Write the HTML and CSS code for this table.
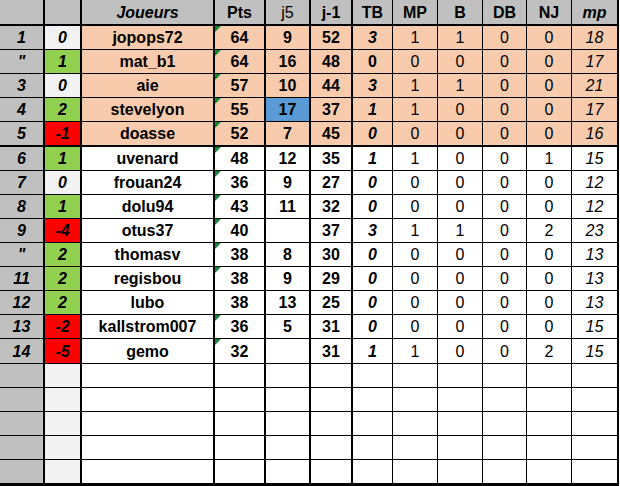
FILE: index.html
```html
<!DOCTYPE html>
<html lang="fr">
<head>
<meta charset="utf-8">
<title>Classement</title>
<link rel="stylesheet" href="styles.css">
</head>
<body>
<div class="sheet">
  <div class="row head">
    <div class="c"></div><div class="c"></div>
    <div class="c bi">Joueurs</div><div class="c b">Pts</div><div class="c">j5</div><div class="c b">j-1</div>
    <div class="c b">TB</div><div class="c b">MP</div><div class="c b">B</div><div class="c b">DB</div><div class="c b">NJ</div><div class="c bi">mp</div>
  </div>

  <div class="row top">
    <div class="c rank">1</div><div class="c ev zero">0</div><div class="c name">jopops72</div><div class="c pts"><i class="tri"></i>64</div><div class="c b">9</div><div class="c b">52</div><div class="c bi">3</div><div class="c">1</div><div class="c">1</div><div class="c">0</div><div class="c">0</div><div class="c it">18</div>
  </div>
  <div class="row top">
    <div class="c rank">"</div><div class="c ev up">1</div><div class="c name">mat_b1</div><div class="c pts"><i class="tri"></i>64</div><div class="c b">16</div><div class="c b">48</div><div class="c b">0</div><div class="c">0</div><div class="c">0</div><div class="c">0</div><div class="c">0</div><div class="c it">17</div>
  </div>
  <div class="row top">
    <div class="c rank">3</div><div class="c ev zero">0</div><div class="c name">aie</div><div class="c pts"><i class="tri"></i>57</div><div class="c b">10</div><div class="c b">44</div><div class="c bi">3</div><div class="c">1</div><div class="c">1</div><div class="c">0</div><div class="c">0</div><div class="c it">21</div>
  </div>
  <div class="row top">
    <div class="c rank">4</div><div class="c ev up">2</div><div class="c name">stevelyon</div><div class="c pts"><i class="tri"></i>55</div><div class="c b blue">17</div><div class="c b">37</div><div class="c bi">1</div><div class="c">1</div><div class="c">0</div><div class="c">0</div><div class="c">0</div><div class="c it">17</div>
  </div>
  <div class="row top sep">
    <div class="c rank">5</div><div class="c ev down">-1</div><div class="c name">doasse</div><div class="c pts"><i class="tri"></i>52</div><div class="c b">7</div><div class="c b">45</div><div class="c bi">0</div><div class="c">0</div><div class="c">0</div><div class="c">0</div><div class="c">0</div><div class="c it">16</div>
  </div>

  <div class="row">
    <div class="c rank">6</div><div class="c ev up">1</div><div class="c name">uvenard</div><div class="c pts"><i class="tri"></i>48</div><div class="c b">12</div><div class="c b">35</div><div class="c bi">1</div><div class="c">1</div><div class="c">0</div><div class="c">0</div><div class="c">1</div><div class="c it">15</div>
  </div>
  <div class="row">
    <div class="c rank">7</div><div class="c ev zero">0</div><div class="c name">frouan24</div><div class="c pts"><i class="tri"></i>36</div><div class="c b">9</div><div class="c b">27</div><div class="c bi">0</div><div class="c">0</div><div class="c">0</div><div class="c">0</div><div class="c">0</div><div class="c it">12</div>
  </div>
  <div class="row">
    <div class="c rank">8</div><div class="c ev up">1</div><div class="c name">dolu94</div><div class="c pts"><i class="tri"></i>43</div><div class="c b">11</div><div class="c b">32</div><div class="c bi">0</div><div class="c">0</div><div class="c">0</div><div class="c">0</div><div class="c">0</div><div class="c it">12</div>
  </div>
  <div class="row">
    <div class="c rank">9</div><div class="c ev down">-4</div><div class="c name">otus37</div><div class="c pts"><i class="tri"></i>40</div><div class="c b"></div><div class="c b">37</div><div class="c bi">3</div><div class="c">1</div><div class="c">1</div><div class="c">0</div><div class="c">2</div><div class="c it">23</div>
  </div>
  <div class="row">
    <div class="c rank">"</div><div class="c ev up">2</div><div class="c name">thomasv</div><div class="c pts"><i class="tri"></i>38</div><div class="c b">8</div><div class="c b">30</div><div class="c bi">0</div><div class="c">0</div><div class="c">0</div><div class="c">0</div><div class="c">0</div><div class="c it">13</div>
  </div>
  <div class="row">
    <div class="c rank">11</div><div class="c ev up">2</div><div class="c name">regisbou</div><div class="c pts"><i class="tri"></i>38</div><div class="c b">9</div><div class="c b">29</div><div class="c bi">0</div><div class="c">0</div><div class="c">0</div><div class="c">0</div><div class="c">0</div><div class="c it">13</div>
  </div>
  <div class="row">
    <div class="c rank">12</div><div class="c ev up">2</div><div class="c name">lubo</div><div class="c pts">38</div><div class="c b">13</div><div class="c b">25</div><div class="c bi">0</div><div class="c">0</div><div class="c">0</div><div class="c">0</div><div class="c">0</div><div class="c it">13</div>
  </div>
  <div class="row">
    <div class="c rank">13</div><div class="c ev down">-2</div><div class="c name">kallstrom007</div><div class="c pts"><i class="tri"></i>36</div><div class="c b">5</div><div class="c b">31</div><div class="c bi">0</div><div class="c">0</div><div class="c">0</div><div class="c">0</div><div class="c">0</div><div class="c it">15</div>
  </div>
  <div class="row tall">
    <div class="c rank">14</div><div class="c ev down">-5</div><div class="c name">gemo</div><div class="c pts"><i class="tri"></i>32</div><div class="c b"></div><div class="c b">31</div><div class="c bi">1</div><div class="c">1</div><div class="c">0</div><div class="c">0</div><div class="c">2</div><div class="c it">15</div>
  </div>

  <div class="row"><div class="c rank"></div><div class="c ev zero"></div><div class="c"></div><div class="c"></div><div class="c"></div><div class="c"></div><div class="c"></div><div class="c"></div><div class="c"></div><div class="c"></div><div class="c"></div><div class="c"></div></div>
  <div class="row"><div class="c rank"></div><div class="c ev zero"></div><div class="c"></div><div class="c"></div><div class="c"></div><div class="c"></div><div class="c"></div><div class="c"></div><div class="c"></div><div class="c"></div><div class="c"></div><div class="c"></div></div>
  <div class="row"><div class="c rank"></div><div class="c ev zero"></div><div class="c"></div><div class="c"></div><div class="c"></div><div class="c"></div><div class="c"></div><div class="c"></div><div class="c"></div><div class="c"></div><div class="c"></div><div class="c"></div></div>
  <div class="row"><div class="c rank"></div><div class="c ev zero"></div><div class="c"></div><div class="c"></div><div class="c"></div><div class="c"></div><div class="c"></div><div class="c"></div><div class="c"></div><div class="c"></div><div class="c"></div><div class="c"></div></div>
  <div class="row last"><div class="c rank"></div><div class="c ev zero"></div><div class="c"></div><div class="c"></div><div class="c"></div><div class="c"></div><div class="c"></div><div class="c"></div><div class="c"></div><div class="c"></div><div class="c"></div><div class="c"></div></div>
</div>
</body>
</html>
```

FILE: styles.css
```css
html, body {
  margin: 0;
  padding: 0;
  background: #ffffff;
}

.sheet {
  width: 619px;
  font-family: "Liberation Sans", Arial, sans-serif;
  font-size: 16px;
  color: #000;
}

.row {
  display: flex;
  height: 24px;
}

.row.head { height: 26px; background: #c0c0c0; }
.row.sep { height: 25px; }
.row.tall { height: 25px; }
.row.last { height: 26px; }

.c {
  position: relative;
  box-sizing: border-box;
  flex: none;
  display: flex;
  align-items: center;
  justify-content: center;
  padding-top: 1px;
  border-right: 1px solid #000;
  border-bottom: 1px solid #000;
  white-space: nowrap;
  overflow: hidden;
}

.head .c { border-bottom-width: 2px; }
.sep .c { border-bottom-width: 2px; }
.last .c { border-bottom-width: 3px; }

.c:nth-child(1)  { width: 45px;  border-right-width: 2px; }
.c:nth-child(2)  { width: 37px;  border-right-width: 2px; }
.c:nth-child(3)  { width: 133px; border-right-width: 2px; }
.c:nth-child(4)  { width: 51px;  border-right-width: 2px; }
.c:nth-child(5)  { width: 45px;  border-right-width: 2px; }
.c:nth-child(6)  { width: 42px;  border-right-width: 2px; }
.c:nth-child(7)  { width: 40px; }
.c:nth-child(8)  { width: 45px; }
.c:nth-child(9)  { width: 45px; }
.c:nth-child(10) { width: 44px; }
.c:nth-child(11) { width: 45px; }
.c:nth-child(12) { width: 47px;  border-right-width: 2px; }

.top .c { background: #f8cbad; }

.b { font-weight: bold; }
.bi { font-weight: bold; font-style: italic; }
.it { font-style: italic; }

.rank,
.top .rank {
  background: #c0c0c0;
  font-weight: bold;
  font-style: italic;
}

.ev { font-weight: bold; font-style: italic; }
.ev.zero, .top .ev.zero { background: #f2f2f2; }
.ev.up, .top .ev.up { background: #92d050; }
.ev.down, .top .ev.down { background: #ff0000; }

.name, .pts { font-weight: bold; }

.top .blue { background: #5b9bd5; }

.tri {
  position: absolute;
  left: 0;
  top: 0;
  width: 0;
  height: 0;
  border-top: 6px solid #0f8a2c;
  border-right: 6px solid transparent;
}
```
